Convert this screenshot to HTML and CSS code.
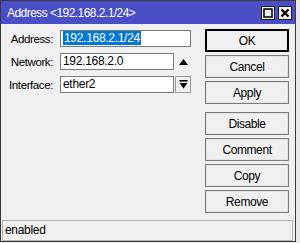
FILE: index.html
```html
<!DOCTYPE html>
<html lang="en">
<head>
    <meta charset="UTF-8">
    <title>Address &lt;192.168.2.1/24&gt;</title>
    <link rel="stylesheet" href="styles.css">
</head>
<body>
    <div class="window">
        <div class="titlebar">
            <span class="title">Address &lt;192.168.2.1/24&gt;</span>
            <div class="title-buttons">
                <span class="tbtn">
                    <svg width="10" height="10" viewBox="0 0 10 10"><rect x="1" y="1" width="8" height="8" fill="none" stroke="#000" stroke-width="1.5"/></svg>
                </span>
                <span class="tbtn">
                    <svg width="10" height="10" viewBox="0 0 10 10"><path d="M1.5 1.5 L8.5 8.5 M8.5 1.5 L1.5 8.5" stroke="#000" stroke-width="2.2"/></svg>
                </span>
            </div>
        </div>

        <div class="content">
            <div class="form">
                <div class="row">
                    <label>Address:</label>
                    <div class="field wide"><span class="selected">192.168.2.1/24</span></div>
                </div>
                <div class="row">
                    <label>Network:</label>
                    <div class="field">192.168.2.0</div>
                    <span class="side">
                        <svg width="9" height="6" viewBox="0 0 9 6"><path d="M0 6 L4.5 0 L9 6 Z" fill="#000"/></svg>
                    </span>
                </div>
                <div class="row">
                    <label>Interface:</label>
                    <div class="field">ether2</div>
                    <span class="drop">
                        <svg width="9" height="9" viewBox="0 0 9 9"><rect x="0.5" y="0" width="8" height="1.6" fill="#000"/><path d="M0.5 3 L8.5 3 L4.5 8.5 Z" fill="#000"/></svg>
                    </span>
                </div>
            </div>

            <div class="buttons">
                <button class="btn default">OK</button>
                <button class="btn">Cancel</button>
                <button class="btn">Apply</button>
                <button class="btn spaced">Disable</button>
                <button class="btn">Comment</button>
                <button class="btn">Copy</button>
                <button class="btn">Remove</button>
            </div>
        </div>

        <div class="status">
            <div class="status-box">enabled</div>
        </div>
    </div>
</body>
</html>
```

FILE: styles.css
```css
body {
    margin: 0;
    height: 243px;
    background: #e9e9e9;
    font-family: 'Liberation Sans', Arial, sans-serif;
    font-size: 11px;
    color: #000;
    overflow: hidden;
}

.window {
    width: 294px;
    height: 240px;
    border: 1px solid #3a3a3a;
    background: #f0f0f0;
    display: flex;
    flex-direction: column;
}

/* Title bar */
.titlebar {
    height: 23px;
    background: #4a4fc8;
    display: flex;
    align-items: center;
    justify-content: space-between;
    padding: 0 3px 0 6px;
}

.title {
    color: #fff;
    font-size: 12px;
    letter-spacing: -0.55px;
}

.title-buttons {
    display: flex;
    gap: 3px;
}

.tbtn {
    width: 12px;
    height: 12px;
    background: #ececec;
    border: 1px solid #1e1e1e;
    display: flex;
    align-items: center;
    justify-content: center;
}

/* Body */
.content {
    flex: 1;
    display: flex;
    justify-content: space-between;
    padding: 5px 6px 0 0;
}

.form {
    display: flex;
    flex-direction: column;
    gap: 6px;
    padding-top: 1px;
}

.row {
    display: flex;
    align-items: center;
    height: 17px;
}

.row label {
    width: 52px;
    margin-right: 7px;
    text-align: right;
    font-size: 11.5px;
    letter-spacing: -0.4px;
}

.field {
    width: 110px;
    height: 15px;
    line-height: 15px;
    background: #fff;
    border: 1px solid #7a7a7a;
    padding-left: 2px;
    font-size: 12px;
    letter-spacing: -0.3px;
}

.field.wide {
    width: 127px;
}

.selected {
    background: #0078d7;
    color: #fff;
    padding: 0 1px;
}

.side {
    width: 17px;
    display: flex;
    justify-content: center;
    margin-left: 1px;
}

.drop {
    width: 14px;
    height: 15px;
    margin-left: 1px;
    border: 1px solid #9a9a9a;
    background: #f0f0f0;
    display: flex;
    align-items: center;
    justify-content: center;
}

/* Buttons */
.buttons {
    display: flex;
    flex-direction: column;
    gap: 3px;
}

.btn {
    width: 84px;
    height: 23px;
    margin: 0;
    padding: 0;
    font-family: inherit;
    font-size: 12px;
    letter-spacing: -0.4px;
    background: #f0f0f0;
    border: 1px solid #7a7a7a;
    box-shadow: inset 0 0 0 1px #e4e4e4;
}

.btn.default {
    border-color: #000;
    box-shadow: inset 0 0 0 1px #000;
}

.btn.spaced {
    margin-top: 5px;
}

/* Status bar */
.status {
    height: 21px;
    padding: 0 2px 0 1px;
}

.status-box {
    height: 19px;
    line-height: 19px;
    border: 1px solid #b4b4b4;
    padding-left: 2px;
    font-size: 12px;
    letter-spacing: -0.3px;
}
```
